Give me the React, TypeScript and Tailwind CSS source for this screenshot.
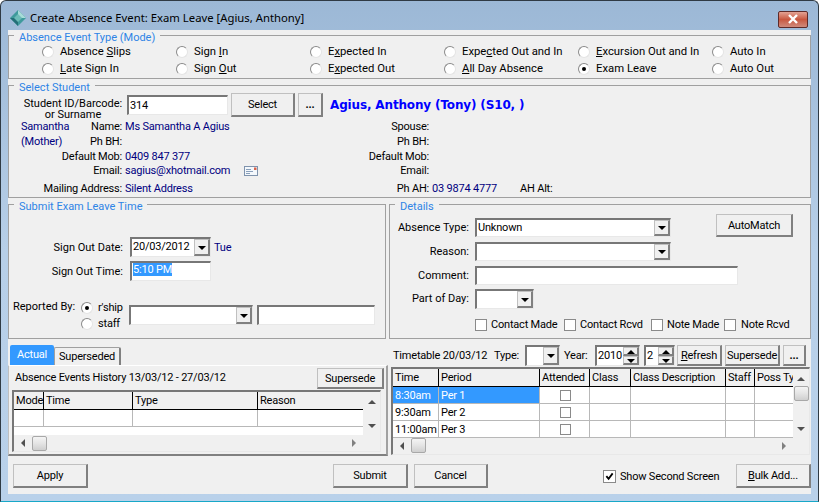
import React from "react";

const FONT = "font-['Roboto',sans-serif] text-[11px] tracking-[-0.2px] leading-[14px] text-black";

function Group({ title, className = "", children }: { title: string; className?: string; children?: React.ReactNode }) {
  return (
    <div className={"relative border border-[#a0a0a0] " + className}>
      <span className="absolute left-[5px] -top-[5px] h-[14px] bg-[#f0f0f0] px-[5px] tracking-normal text-[#2e84e6] whitespace-nowrap">{title}</span>
      {children}
    </div>
  );
}

function Radio({ on = false }: { on?: boolean }) {
  return (
    <span className="flex h-[12px] w-[12px] shrink-0 items-center justify-center rounded-full border border-t-[#8a8a8a] border-l-[#8a8a8a] border-r-[#e4e4e4] border-b-[#e4e4e4] bg-white">
      {on && <span className="h-[4px] w-[4px] rounded-full bg-black" />}
    </span>
  );
}

function RadioItem({ label, on }: { label: React.ReactNode; on?: boolean }) {
  return (
    <div className="flex h-[17px] items-center gap-[6px] whitespace-nowrap text-[11.3px] tracking-normal">
      <Radio on={on} />
      <span>{label}</span>
    </div>
  );
}

function U({ children }: { children: React.ReactNode }) {
  return <span className="underline">{children}</span>;
}

function Btn({ className = "", children }: { className?: string; children: React.ReactNode }) {
  return (
    <div className={"flex shrink-0 items-center justify-center whitespace-nowrap border-t border-l border-t-[#c0c0c0] border-l-[#c0c0c0] border-r-2 border-b-2 border-r-[#808080] border-b-[#808080] bg-[#f0f0f0] pt-[1px] " + className}>
      {children}
    </div>
  );
}

const SUNKEN = "border-t-2 border-l-2 border-t-[#777777] border-l-[#777777] border-r border-b border-r-[#e8e8e8] border-b-[#e8e8e8] bg-white";

function Arrow() {
  return <span className="h-0 w-0 border-x-[4px] border-t-[4px] border-x-transparent border-t-black" />;
}

function Combo({ className = "", value = "" }: { className?: string; value?: string }) {
  return (
    <div className={"flex shrink-0 items-stretch " + SUNKEN + " " + className}>
      <span className="flex-1 overflow-hidden whitespace-nowrap pl-[1px] leading-[15px]">{value}</span>
      <Btn className="w-[16px] border-r-[#707070] border-b-[#707070]">
        <Arrow />
      </Btn>
    </div>
  );
}

function Field({ className = "", children }: { className?: string; children?: React.ReactNode }) {
  return <div className={"shrink-0 whitespace-nowrap " + SUNKEN + " " + className}>{children}</div>;
}

function Check({ on = false, className = "" }: { on?: boolean; className?: string }) {
  return (
    <span className={"flex shrink-0 items-center justify-center border border-[#8a8a8a] bg-white " + className}>
      {on && (
        <svg viewBox="0 0 10 10" className="h-[9px] w-[9px]">
          <path d="M1.5 4.5 L4 7.5 L8.5 1.5" fill="none" stroke="#000" strokeWidth="2" />
        </svg>
      )}
    </span>
  );
}

function Spin({ className = "", value }: { className?: string; value: string }) {
  return (
    <div className={"flex shrink-0 items-stretch " + SUNKEN + " " + className}>
      <span className="flex-1 pl-[1px] leading-[17px]">{value}</span>
      <div className="flex w-[16px] flex-col">
        <Btn className="flex-1 border-r border-b border-r-[#808080] border-b-[#808080] pt-0">
          <span className="h-0 w-0 border-x-[4px] border-b-[4px] border-x-transparent border-b-black" />
        </Btn>
        <Btn className="flex-1 border-r border-b border-r-[#808080] border-b-[#808080] pt-0">
          <Arrow />
        </Btn>
      </div>
    </div>
  );
}

function Thumb({ className = "" }: { className?: string }) {
  return (
    <span className={"block rounded-[2px] border border-[#a8a8a8] bg-gradient-to-b from-[#f4f4f4] via-[#e4e4e4] to-[#cfcfcf] " + className} />
  );
}

function HScroll({ className = "" }: { className?: string }) {
  return (
    <div className={"flex items-center bg-[#f0f0f0] " + className}>
      <span className="ml-[7px] h-0 w-0 border-y-[4px] border-r-[4px] border-y-transparent border-r-[#505050]" />
      <Thumb className="ml-[7px] h-[15px] w-[15px]" />
      <span className="ml-auto mr-[7px] h-0 w-0 border-y-[4px] border-l-[4px] border-y-transparent border-l-[#808080]" />
    </div>
  );
}

function HeadCell({ w, tall = false, children }: { w: string; tall?: boolean; children?: React.ReactNode }) {
  return <div className={"shrink-0 overflow-hidden whitespace-nowrap border-r border-black pl-[2px] " + (tall ? "leading-[18px] " : "leading-[17px] ") + w}>{children}</div>;
}

function Cell({ w, className = "", children }: { w: string; className?: string; children?: React.ReactNode }) {
  return <div className={"flex shrink-0 items-center overflow-hidden whitespace-nowrap border-r border-[#b8b8b8] pl-[2px] " + w + " " + className}>{children}</div>;
}

const TT = [
  { t: "8:30am", p: "Per 1", sel: true },
  { t: "9:30am", p: "Per 2", sel: false },
  { t: "11:00am", p: "Per 3", sel: false },
];

export default function App() {
  const v = "text-[#000080]";
  return (
    <div className={"flex h-[502px] w-[819px] flex-col overflow-hidden rounded-t-[6px] border border-[#2f3a44] border-b-[#18a8c8] bg-gradient-to-b from-[#9cb8d6] via-[#b7cfe8] to-[#b9d1ea] " + FONT}>
      {/* Title bar */}
      <div className="flex h-[29px] shrink-0 items-center pt-[4px]">
        <svg viewBox="0 0 16 16" className="ml-[9px] h-[16px] w-[16px]">
          <path d="M8 0 L16 8 L8 16 L0 8 Z" fill="#3f9a9c" />
          <path d="M8 0 L16 8 L8 8 Z" fill="#a8dcd8" />
          <path d="M8 8 L8 16 L0 8 Z" fill="#236f78" />
          <path d="M8 4 L12 8 L8 12 L4 8 Z" fill="#6dbcb8" />
        </svg>
        <span className="ml-[4px] whitespace-nowrap font-['Noto_Sans',sans-serif] text-[11.3px] tracking-normal">Create Absence Event: Exam Leave [Agius, Anthony]</span>
        <div className="ml-auto mr-[10px] mt-[3px] flex h-[17px] w-[30px] items-center justify-center rounded-[2px] border border-[#5e2a28] bg-gradient-to-b from-[#e2a294] via-[#c8573f] to-[#cf8a7c]">
          <svg viewBox="0 0 12 10" className="h-[10px] w-[12px]">
            <path d="M2 1 L10 9 M10 1 L2 9" stroke="#ffffff" strokeWidth="2.4" fill="none" />
          </svg>
        </div>
      </div>

      {/* Client */}
      <div className="mx-[7px] flex h-[464px] flex-col bg-[#f0f0f0]">
        <Group title="Absence Event Type (Mode)" className="mt-[5px] h-[44px]">
          <div className="grid grid-cols-[repeat(6,134px)] pl-[33px] pt-[7px]">
            <RadioItem label={<>Absence <U>S</U>lips</>} />
            <RadioItem label={<>Sign <U>I</U>n</>} />
            <RadioItem label={<>E<U>x</U>pected In</>} />
            <RadioItem label={<>Expe<U>c</U>ted Out and In</>} />
            <RadioItem label={<><U>E</U>xcursion Out and In</>} />
            <RadioItem label="Auto In" />
            <RadioItem label={<><U>L</U>ate Sign In</>} />
            <RadioItem label={<>Sign <U>O</U>ut</>} />
            <RadioItem label={<>E<U>x</U>pected Out</>} />
            <RadioItem label={<><U>A</U>ll Day Absence</>} />
            <RadioItem label="Exam Leave" on />
            <RadioItem label="Auto Out" />
          </div>
        </Group>

        <Group title="Select Student" className="mt-[6px] h-[113px]">
          <div className="mt-[7px] flex h-[24px] items-center">
            <div className="ml-[11px] w-[106px] pt-[8px] text-center leading-[11px] tracking-normal whitespace-nowrap">
              Student ID/Barcode:
              <br />
              or Surname
            </div>
            <Field className="ml-[1px] h-[20px] w-[101px] pl-[1px] leading-[18px]">314</Field>
            <Btn className="ml-[3px] h-[24px] w-[64px]">Select</Btn>
            <Btn className="ml-[3px] h-[24px] w-[25px] font-bold">...</Btn>
            <span className="ml-[7px] whitespace-nowrap font-['DejaVu_Sans',sans-serif] text-[12px] font-bold tracking-[-0.15px] text-[#0000ff]">Agius, Anthony (Tony) (S10, )</span>
          </div>
          <div className="mt-[3px] grid h-[14px] grid-cols-[113px_200px_107px_1fr]">
            <div className="flex justify-between pl-[12px]">
              <span className={v}>Samantha</span>
              <span>Name:</span>
            </div>
            <span className={"pl-[3px] " + v}>Ms Samantha A Agius</span>
            <span className="text-right">Spouse:</span>
          </div>
          <div className="grid h-[16px] grid-cols-[113px_200px_107px_1fr] items-center">
            <div className="flex justify-between pl-[12px]">
              <span className={v}>(Mother)</span>
              <span>Ph BH:</span>
            </div>
            <span />
            <span className="text-right">Ph BH:</span>
          </div>
          <div className="grid h-[13px] grid-cols-[113px_200px_107px_1fr] items-center">
            <span className="text-right">Default Mob:</span>
            <span className={"pl-[3px] " + v}>0409 847 377</span>
            <span className="text-right">Default Mob:</span>
          </div>
          <div className="grid h-[16px] grid-cols-[113px_200px_107px_1fr] items-center">
            <span className="text-right">Email:</span>
            <div className="flex items-center pl-[3px]">
              <span className={"w-[119px] " + v}>sagius@xhotmail.com</span>
              <svg viewBox="0 0 14 10" className="h-[10px] w-[14px]">
                <rect x="0.5" y="0.5" width="13" height="9" fill="#f4f8fc" stroke="#7f93ad" />
                <path d="M2 3.5 H7 M2 5.5 H9 M2 7.5 H6" stroke="#8aa0bb" strokeWidth="1" />
                <rect x="10" y="1.5" width="2.5" height="2.5" fill="#d9634a" />
              </svg>
            </div>
            <span className="text-right">Email:</span>
          </div>
          <div className="mt-[2px] grid h-[16px] grid-cols-[113px_200px_107px_1fr] items-center">
            <span className="text-right">Mailing Address:</span>
            <span className={"pl-[3px] " + v}>Silent Address</span>
            <span className="text-right">Ph AH:</span>
            <div className="flex pl-[3px]">
              <span className={"w-[88px] " + v}>03 9874 4777</span>
              <span>AH Alt:</span>
            </div>
          </div>
        </Group>

        <div className="mt-[6px] flex h-[135px]">
          <Group title="Submit Exam Leave Time" className="w-[378px]">
            <div className="mt-[32px] flex h-[20px] items-center">
              <span className="w-[114px] pt-[1px] text-right tracking-normal">Sign Out Date:</span>
              <Combo className="ml-[7px] h-[20px] w-[81px]" value="20/03/2012" />
              <span className={"ml-[3px] pt-[1px] " + v}>Tue</span>
            </div>
            <div className="mt-[4px] flex h-[20px] items-center">
              <span className="w-[114px] pt-[1px] text-right tracking-normal">Sign Out Time:</span>
              <Field className="ml-[7px] h-[20px] w-[81px] pl-[1px]">
                <span className="bg-[#3399ff] text-white">5:10 PM</span>
              </Field>
            </div>
            <div className="mt-[24px] flex">
              <span className="ml-[4px] -mt-[5px] h-[14px] w-[68px] whitespace-nowrap tracking-normal">Reported By:</span>
              <div className="-mt-[5px] flex w-[40px] flex-col">
                <div className="flex h-[16px] items-center gap-[5px]">
                  <Radio on />
                  <span>r'ship</span>
                </div>
                <div className="flex h-[16px] items-center gap-[5px]">
                  <Radio />
                  <span>staff</span>
                </div>
              </div>
              <Combo className="ml-[8px] h-[20px] w-[124px]" />
              <Field className="ml-[4px] h-[20px] w-[118px]" />
            </div>
          </Group>
          <Group title="Details" className="ml-[3px] w-[422px]">
            <div className="mt-[13px] flex items-start">
              <span className="w-[79px] text-right leading-[19px] tracking-normal">Absence Type:</span>
              <Combo className="ml-[6px] h-[19px] w-[196px]" value="Unknown" />
              <Btn className="-mt-[4px] ml-[45px] h-[23px] w-[77px]">AutoMatch</Btn>
            </div>
            <div className="mt-[5px] flex">
              <span className="w-[79px] text-right leading-[19px] tracking-normal">Reason:</span>
              <Combo className="ml-[6px] h-[19px] w-[196px]" />
            </div>
            <div className="mt-[5px] flex">
              <span className="w-[79px] text-right leading-[19px] tracking-normal">Comment:</span>
              <Field className="ml-[6px] h-[19px] w-[263px]" />
            </div>
            <div className="mt-[4px] flex">
              <span className="w-[79px] text-right leading-[20px] tracking-normal">Part of Day:</span>
              <Combo className="ml-[6px] h-[20px] w-[59px]" />
            </div>
            <div className="mt-[9px] flex h-[14px] items-center whitespace-nowrap">
              <Check className="ml-[85px] h-[12px] w-[12px]" />
              <span className="ml-[4px] w-[73px]">Contact Made</span>
              <Check className="h-[12px] w-[12px]" />
              <span className="ml-[4px] w-[71px]">Contact Rcvd</span>
              <Check className="h-[12px] w-[12px]" />
              <span className="ml-[4px] w-[57px]">Note Made</span>
              <Check className="h-[12px] w-[12px]" />
              <span className="ml-[5px]">Note Rcvd</span>
            </div>
          </Group>
        </div>

        <div className="mt-[6px] flex h-[111px]">
          {/* Left tabs */}
          <div className="flex w-[380px] shrink-0 flex-col">
            <div className="flex h-[20px] items-end pl-[2px]">
              <div className="flex h-[20px] w-[44px] items-center justify-center rounded-t-[2px] bg-[#3399ff] text-white">Actual</div>
              <div className="flex h-[18px] w-[67px] items-center justify-center rounded-t-[2px] border border-b-0 border-[#a0a0a0] border-r-2 border-r-[#808080]">Superseded</div>
            </div>
            <div className="flex h-[91px] flex-col border-t border-l border-t-white border-l-[#c0c0c0] border-r-2 border-b-2 border-r-[#a0a0a0] border-b-[#808080]">
              <div className="flex h-[24px] items-center">
                <span className="ml-[6px] whitespace-nowrap">Absence Events History 13/03/12 - 27/03/12</span>
                <Btn className="ml-auto mr-[2px] mt-[1px] h-[21px] w-[67px]">Supersede</Btn>
              </div>
              <div className="ml-[3px] flex h-[62px] w-[369px] border-t-2 border-l-2 border-t-[#777777] border-l-[#777777] border-r border-b border-r-[#e8e8e8] border-b-[#e8e8e8]">
                <div className="flex w-[351px] flex-col">
                  <div className="flex h-[18px] border-b border-black bg-[#f0f0f0]">
                    <HeadCell w="w-[30px]">Mode</HeadCell>
                    <HeadCell w="w-[89px]">Time</HeadCell>
                    <HeadCell w="w-[125px]">Type</HeadCell>
                    <div className="pl-[2px] leading-[17px]">Reason</div>
                  </div>
                  <div className="flex h-[17px] border-b border-[#b8b8b8] bg-white">
                    <Cell w="w-[30px]" />
                    <Cell w="w-[89px]" />
                    <Cell w="w-[125px]" />
                  </div>
                  <div className="h-[9px] bg-white" />
                  <HScroll className="h-[16px]" />
                </div>
                <div className="flex w-[17px] flex-col items-center bg-[#f0f0f0]">
                  <span className="mt-[8px] h-0 w-0 border-x-[4px] border-b-[4px] border-x-transparent border-b-[#505050]" />
                  <span className="mt-[20px] h-0 w-0 border-x-[4px] border-t-[4px] border-x-transparent border-t-[#505050]" />
                </div>
              </div>
            </div>
          </div>

          {/* Right timetable */}
          <div className="ml-[3px] flex flex-1 flex-col">
            <div className="flex h-[21px] items-center whitespace-nowrap">
              <span className="ml-[2px] w-[101px]">Timetable 20/03/12</span>
              <span className="w-[31px]">Type:</span>
              <Combo className="h-[21px] w-[35px]" />
              <span className="ml-[4px] w-[31px]">Year:</span>
              <Spin className="h-[21px] w-[45px]" value="2010" />
              <Spin className="ml-[4px] h-[21px] w-[31px]" value="2" />
              <Btn className="ml-[2px] h-[21px] w-[45px]"><span><U>R</U>efresh</span></Btn>
              <Btn className="ml-[3px] h-[21px] w-[55px]">Supersede</Btn>
              <Btn className="ml-[3px] h-[21px] w-[23px] font-bold">...</Btn>
            </div>
            <div className="mt-[1px] flex h-[88px] w-[419px] border-t-2 border-l-2 border-t-[#777777] border-l-[#777777] border-r border-b border-r-[#e8e8e8] border-b-[#e8e8e8]">
              <div className="flex w-[400px] flex-col">
                <div className="flex h-[18px] border-b border-black bg-[#f0f0f0]">
                  <HeadCell tall w="w-[46px]">Time</HeadCell>
                  <HeadCell tall w="w-[101px]">Period</HeadCell>
                  <HeadCell tall w="w-[50px]">Attended</HeadCell>
                  <HeadCell tall w="w-[41px]">Class</HeadCell>
                  <HeadCell tall w="w-[95px]">Class Description</HeadCell>
                  <HeadCell tall w="w-[29px]">Staff</HeadCell>
                  <div className="overflow-hidden whitespace-nowrap pl-[2px] leading-[18px]">Poss Type</div>
                </div>
                {TT.map((r) => (
                  <div key={r.t} className="flex h-[17px] border-b border-[#b8b8b8] bg-white">
                    <Cell w="w-[46px]" className={"pt-[1px] " + (r.sel ? "bg-[#3399ff] text-white" : "")}>{r.t}</Cell>
                    <Cell w="w-[101px]" className={"pt-[1px] " + (r.sel ? "bg-[#3399ff] text-white" : "")}>{r.p}</Cell>
                    <Cell w="w-[50px]" className="justify-center pl-0">
                      <Check className="h-[11px] w-[11px]" />
                    </Cell>
                    <Cell w="w-[41px]" />
                    <Cell w="w-[95px]" />
                    <Cell w="w-[29px]" />
                  </div>
                ))}
                <HScroll className="h-[15px]" />
              </div>
              <div className="flex w-[17px] flex-col items-center bg-[#f0f0f0]">
                <span className="mt-[8px] h-0 w-0 border-x-[4px] border-b-[4px] border-x-transparent border-b-[#505050]" />
                <Thumb className="mt-[5px] h-[15px] w-[15px]" />
                <span className="mt-[26px] h-0 w-0 border-x-[4px] border-t-[4px] border-x-transparent border-t-[#505050]" />
              </div>
            </div>
          </div>
        </div>

        <div className="mt-[8px] flex h-[24px] items-stretch">
          <Btn className="ml-[5px] w-[75px]">Apply</Btn>
          <Btn className="ml-[245px] w-[75px]">Submit</Btn>
          <Btn className="ml-[6px] w-[74px]">Cancel</Btn>
          <div className="ml-[115px] flex w-[133px] items-center pt-[1px]">
            <Check on className="h-[13px] w-[13px]" />
            <span className="ml-[4px] whitespace-nowrap">Show Second Screen</span>
          </div>
          <Btn className="w-[75px]"><span><U>B</U>ulk Add...</span></Btn>
        </div>
      </div>
    </div>
  );
}
